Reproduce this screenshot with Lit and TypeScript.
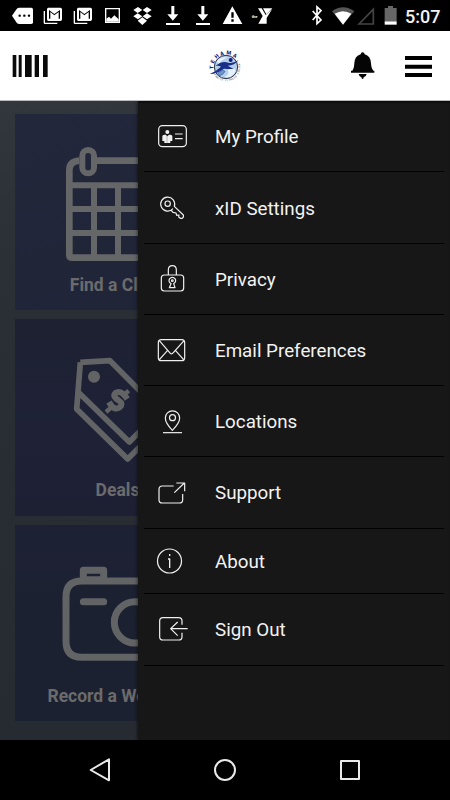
import { LitElement, html, svg, css } from "lit";
import { customElement } from "lit/decorators.js";

// Icons are drawn on a grid of three units per pixel.
const statusIcons = svg`
  <g fill="#fff" stroke="none">
    <path d="M36 47L50 27Q53 23 58 23H94Q99 23 99 28V67Q99 72 94 72H58Q53 72 50 68Z"/>
    <g fill="#000"><circle cx="59" cy="47" r="3.6"/><circle cx="73" cy="47" r="3.6"/><circle cx="87" cy="47" r="3.6"/></g>
    ${[0, 90].map((x) => svg`<g transform="translate(${x} 0)">
      <path d="M131 33H135V68H172V72H135Q131 72 131 68Z"/>
      <path fill-rule="evenodd" d="M145 23H181Q186 23 186 28V58Q186 63 181 63H145Q141 63 141 58V28Q141 23 145 23ZM147 30V56H151V36L163 46L176 36V56H180V30L163 42Z"/>
    </g>`)}
    <path fill-rule="evenodd" d="M315 24H360V69H315ZM319 28V65H356V28Z"/>
    <path d="M319 56L327 50L333 56L343 46L356 58V65H319Z"/>
    <path d="M414 21L427 30L413 39L400 30ZM441 21L455 30L441 39L428 30ZM413 40L427 49L414 58L400 49ZM441 40L455 49L441 58L428 49ZM427 52L441 62L427 75L413 62Z"/>
    ${[0, 90].map((x) => svg`<path transform="translate(${x} 0)" d="M514 18H523V43H535L518.500 62L502 43H514ZM498 69H540V75H498Z"/>`)}
    <path fill-rule="evenodd" d="M697 19L727 72H668ZM694 37V53H701V37ZM694 58V65H701V58Z"/>
    <path d="M774 25H785L797 45L817 26L800 54V71H775L788 48Z"/><path d="M789 25H817L799 43Z"/>
    <text x="755" y="55" font-size="12" font-weight="700">the</text>
  </g>
  <path d="M938 33L963 60L951 71V21L963 32L938 60" fill="none" stroke="#fff" stroke-width="5"/>
  <path d="M996 34Q1029 10 1063 34L1029 74Z" fill="#555"/>
  <path d="M1004 41Q1029 26 1054 41L1029 74Z" fill="#fff"/>
  <path d="M1077 72L1120 28V72Z" fill="none" stroke="#444" stroke-width="5"/>
  <path d="M1154 24H1164V18H1179V24H1190V64H1154Z" fill="#666"/><path d="M1154 64H1190V74H1154Z" fill="#fff"/>`;

const logoLetters: [string, number, number, number][] = [
  ["T", 635, 202, -84], ["E", 638, 185, -62], ["H", 650, 169, -42],
  ["A", 666, 161, -18], ["M", 686, 159, 8], ["A", 705, 167, 30],
];
const motto = "FAMILY FITNESS CENTER";

const logo = svg`
  <circle cx="678" cy="201" r="35" fill="#b5cfe8" stroke="#26314a" stroke-width="3"/>
  <path d="M650 184Q665 168 682 173Q665 178 656 192ZM689 207Q714 201 704 219Q692 235 675 231Q690 221 683 211Z" fill="#e5f2fc"/>
  <path d="M647 198Q665 181 685 188Q701 191 716 180Q704 197 683 197L701 207Q684 208 672 206Q654 221 629 222Q651 212 663 200Q656 195 647 198Z" fill="#1a2f88"/>
  <path d="M668 211Q647 218 657 228Q671 224 675 214Z" fill="#7197cd" stroke="#3458a1" stroke-width="2"/>
  <circle cx="692" cy="180" r="6" fill="#102080"/>
  <g fill="#18207d" font-size="16" font-weight="900" text-anchor="middle">
    ${logoLetters.map(([c, x, y, a]) => svg`<text transform="translate(${x} ${y}) rotate(${a})" y="5">${c}</text>`)}
  </g>
  <g fill="#6f7787" font-size="7" font-weight="700" text-anchor="middle">
    ${[...motto].map((c, i) => {
      const a = 145 - i * 7.8;
      const r = (a * Math.PI) / 180;
      return svg`<text transform="translate(${678 + 41 * Math.cos(r)} ${201 + 41 * Math.sin(r)}) rotate(${a - 90})" y="2">${c}</text>`;
    })}
  </g>`;

const calendar = svg`<g fill="none" stroke="#656668">
  <path stroke-width="20" d="M238 182Q208 184 208 211V465Q208 473 217 473H420M291 182H420"/>
  <rect x="247" y="150" width="35" height="70" rx="17" stroke-width="18"/>
  <path stroke-width="18" d="M208 256H420M208 327H420M208 399H420M282 256V473M354 256V473"/></g>`;
const tag = svg`<g fill="none" stroke="#626364" stroke-width="17" stroke-linejoin="round">
  <path d="M241 157L330 152L540 365M241 157L230 297L383 447L470 360M235 247L388 396L470 314"/>
  <circle cx="282" cy="200" r="18" fill="#626364" stroke="none"/>
  <path stroke-width="13" d="M318 306L334 292M370 257L386 242"/>
  <path stroke-width="18" d="M327 276Q342 304 359 292Q371 281 357 272Q336 259 346 249Q363 238 382 267"/></g>`;
const camera = svg`<g fill="none" stroke="#626364" stroke-width="21" stroke-linecap="round">
  <path d="M430 198H245Q198 198 198 245V379Q198 427 245 427H430M250 260H311"/>
  <path stroke-linejoin="round" d="M250 190V166H311V190"/><path d="M260 188H302" stroke-width="8"/>
  <circle cx="405" cy="322" r="62"/></g>`;

const tiles = [
  { label: "Find a Class", icon: calendar, box: "45 42 615 450", cls: "one" },
  { label: "Deals", icon: tag, box: "45 27 615 450", cls: "two" },
  { label: "Record a Workout", icon: camera, box: "45 30 615 450", cls: "three" },
];

const items = [
  { label: "My Profile", y: 54, cls: "h71", icon: svg`<rect x="71" y="76" width="83" height="63" rx="11"/><g fill="#f0f0f0" stroke="none"><circle cx="97" cy="95" r="6"/><path d="M82 108Q82 103 88 103H92L97 108L102 103H106Q112 103 112 108V122H106V128H88V122H82Z"/></g><path d="M96 107V127" stroke="#999" stroke-width="2"/><path d="M120 101H143M120 115H143"/>` },
  { label: "xID Settings", y: 267, cls: "h72 low", icon: svg`<circle cx="98" cy="310" r="8"/><path d="M114 325A21 21 0 1 1 118 318L145 344Q147 352 141 354H136L131 350L132 344L125 345L123 338L114 336L108 329"/>` },
  { label: "Privacy", y: 483, cls: "h71", icon: svg`<rect x="79" y="524" width="67" height="48" rx="9"/><path d="M100 524V509Q100 496 112 496Q124 496 124 509V524"/><path d="M108 550A10 10 0 1 1 116 550L120 562H103Z"/><circle cx="112" cy="541" r="2.500"/>` },
  { label: "Email Preferences", y: 66, cls: "h71", icon: svg`<rect x="70" y="88" width="79" height="63" rx="9"/><path d="M73 91L104 127Q109 134 115 127L147 91M73 148L98 120M146 148L121 120"/>` },
  { label: "Locations", y: 279, cls: "h71", icon: svg`<path d="M112 360Q91 338 91 323A21.500 21.500 0 0 1 134 323Q134 338 112 360Z"/><circle cx="112.500" cy="322" r="9"/><path d="M84 367H141"/>` },
  { label: "Support", y: 492, cls: "h72", icon: svg`<path d="M116 527H82Q72 527 72 537V568Q72 578 82 578H133Q143 578 143 568V551M118 547L148 518M124 518H149V543"/>` },
  { label: "About", y: 69, cls: "h65", icon: svg`<circle cx="103.500" cy="122" r="36"/><path d="M99 116H104V143M104 101V107" stroke-width="4"/>` },
  { label: "Sign Out", y: 273, cls: "h72", icon: svg`<path d="M141 313V302Q141 292 131 292H84Q74 292 74 302V349Q74 359 84 359H131Q141 359 141 349V337M158 325H107M128 305L107 325L128 346"/>` },
];

@customElement("app-root")
export class AppRoot extends LitElement {
  static styles = css`
    :host { display: flex; flex-direction: column; width: 450px; height: 800px; overflow: hidden; background: #000; font-family: Roboto, sans-serif; }
    svg { display: block; flex: none; }
    .status { display: flex; height: 31px; background: #000; color: #f4f4f4; }
    .clock { font-size: 18px; font-weight: 500; line-height: 33px; margin-left: 5px; white-space: nowrap; }
    .header { height: 70px; background: #fff; }
    .body { flex: none; height: 639px; display: grid; grid-template-columns: 138px 312px; overflow: hidden; }
    .page { display: flex; flex-direction: column; gap: 9px; padding: 13px 0 0 15px; overflow: hidden; background: linear-gradient(177deg, #32363d 0%, #2a3036 25%, #282c33 60%, #262b32 100%); }
    .tile { width: 205px; height: 196px; flex: none; display: flex; flex-direction: column; }
    .one { background: linear-gradient(160deg, #23273b, #202437); }
    .two { height: 197px; background: linear-gradient(#1d2132, #1f2237 55%, #1d2033); }
    .three { background: linear-gradient(#1e2135, #1b2130 65%, #1c2131); }
    .caption { font-size: 17.500px; font-weight: 700; color: #6b6b6c; line-height: 20px; margin-top: 11px; text-align: center; white-space: nowrap; }
    .drawer { background: #171717; padding: 0 6px; box-shadow: -1px 0 3px rgba(0,0,0,.45), inset 0 2px 1px rgba(0,0,0,.4); z-index: 1; }
    .item { display: flex; box-sizing: border-box; border-bottom: 1px solid #000; padding-left: 10px; }
    .item svg { margin-top: 17px; }
    .h71 { height: 71px; }
    .h72 { height: 72px; }
    .h65 { height: 65px; }
    .h65 svg { margin-top: 14px; }
    .name { margin-left: 25px; color: #f2f2f2; font-size: 18.780px; line-height: 73px; white-space: nowrap; }
    .low .name { line-height: 74px; }
    .h65 .name { line-height: 66px; }
    .nav { height: 60px; }
  `;

  render() {
    return html`
      <div class="status">
        <svg width="400" height="31" viewBox="0 0 1200 93">${statusIcons}</svg>
        <span class="clock">5:07</span>
      </div>
      <div class="header">
        <svg width="450" height="70" viewBox="0 93 1350 210">
          <path fill="#0a0a0a" d="M38 165H49V231H38ZM56 165H65V231H56ZM75 165H95V231H75ZM104 165H117V231H104ZM129 165H143V231H129Z"/>
          ${logo}
          <path fill="#050505" d="M1088 157Q1093 157 1094 163Q1112 168 1113 190Q1114 206 1120 212H1123V218H1053V212H1057Q1062 206 1063 190Q1064 168 1082 163Q1083 157 1088 157ZM1076 222H1100Q1098 231 1091 232Q1091 237 1088 237Q1085 237 1084 232Q1078 231 1076 222Z"/>
          <path fill="#000" d="M1215 168H1296V180H1215ZM1215 194H1296V206H1215ZM1215 219H1296V231H1215Z"/>
          <path fill="#a5a5a5" d="M0 301H1350V303H0Z"/>
        </svg>
      </div>
      <div class="body">
        <div class="page">
          ${tiles.map((t) => html`<div class="tile ${t.cls}">
            <svg width="205" height="150" viewBox=${t.box}>${t.icon}</svg>
            <div class="caption">${t.label}</div>
          </div>`)}
        </div>
        <div class="drawer">
          ${items.map((i) => html`<div class="item ${i.cls}">
            <svg width="36" height="36" viewBox="57 ${i.y - 1} 108 108" fill="none" stroke="#f0f0f0" stroke-width="3.600" stroke-linejoin="round">${i.icon}</svg>
            <span class="name">${i.label}</span>
          </div>`)}
        </div>
      </div>
      <div class="nav">
        <svg width="450" height="60" viewBox="-180 0 1350 180" fill="none" stroke="#e9e9e9" stroke-width="6" stroke-linejoin="round">
          <path d="M147 58V121L92 90Z"/><circle cx="495" cy="90" r="30"/><rect x="843" y="63" width="54" height="54"/>
        </svg>
      </div>`;
  }
}
